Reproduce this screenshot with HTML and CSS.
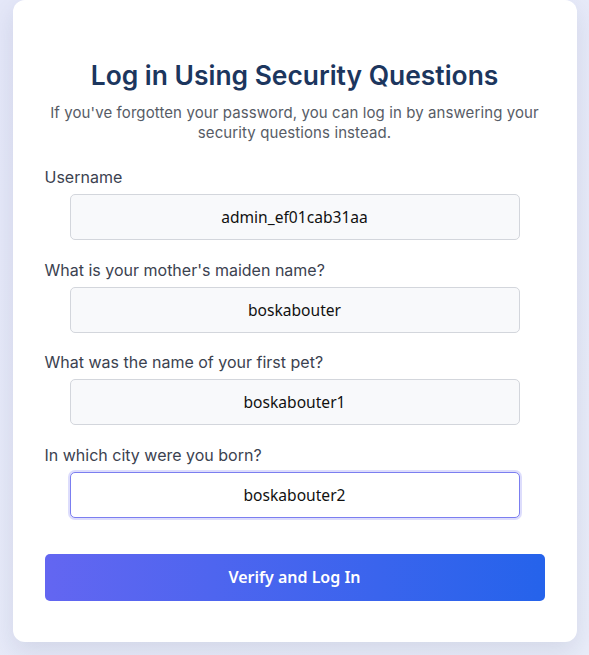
FILE: index.html
```html
<!DOCTYPE html>
<html lang="en">
<head>
<meta charset="utf-8">
<title>Log in Using Security Questions</title>
<link rel="stylesheet" href="styles.css">
</head>
<body>
<main class="card">
  <h1 class="title">Log in Using Security Questions</h1>
  <p class="subtitle">If you've forgotten your password, you can log in by answering your security questions instead.</p>
  <form class="form">
    <div class="field">
      <label class="label" for="username">Username</label>
      <input class="input" id="username" type="text" value="admin_ef01cab31aa">
    </div>
    <div class="field">
      <label class="label" for="q1">What is your mother's maiden name?</label>
      <input class="input" id="q1" type="text" value="boskabouter">
    </div>
    <div class="field">
      <label class="label" for="q2">What was the name of your first pet?</label>
      <input class="input" id="q2" type="text" value="boskabouter1">
    </div>
    <div class="field">
      <label class="label" for="q3">In which city were you born?</label>
      <input class="input input-focus" id="q3" type="text" value="boskabouter2">
    </div>
    <button class="button" type="button">Verify and Log In</button>
  </form>
</main>
</body>
</html>
```
FILE: styles.css
```css
* { box-sizing: border-box; }
html, body { margin: 0; padding: 0; }
body {
  min-height: 655px;
  background: linear-gradient(135deg, #e4e7f8 0%, #e9edf9 100%);
  font-family: Inter, "Noto Sans", sans-serif;
}
.card {
  width: 564px;
  margin: 0 auto;
  background: #ffffff;
  border-radius: 12px;
  padding: 59px 32px 41px;
  box-shadow: 0 10px 25px rgba(30, 40, 90, 0.10);
}
.title {
  margin: 0;
  text-align: center;
  font-size: 26.4px;
  line-height: 32px;
  font-weight: 600;
  color: #1c365e;
}
.subtitle {
  margin: 12px 0 0;
  text-align: center;
  font-size: 15px;
  line-height: 20px;
  letter-spacing: 0.1px;
  color: #575c66;
}
.form {
  margin-top: 24px;
  display: flex;
  flex-direction: column;
}
.field {
  display: flex;
  flex-direction: column;
  margin-bottom: 19.5px;
}
.label {
  font-size: 16px;
  line-height: 20px;
  color: #3b4250;
  margin-bottom: 7px;
}
.input {
  align-self: center;
  width: 450px;
  height: 46px;
  border: 1px solid #d3d6dc;
  border-radius: 5px;
  background: #f8f9fb;
  text-align: center;
  font-family: "Noto Sans", sans-serif;
  font-size: 15.6px;
  color: #111111;
  outline: none;
}
.input-focus {
  background: #ffffff;
  border-color: #7b7ef0;
  box-shadow: 0 0 0 2px rgba(99, 102, 241, 0.22);
}
.button {
  margin-top: 16.5px;
  height: 47px;
  border: none;
  border-radius: 5px;
  background: linear-gradient(90deg, #6366f1 0%, #2563eb 100%);
  color: #ffffff;
  font-family: "Noto Sans", sans-serif;
  font-size: 16px;
  font-weight: 600;
  cursor: pointer;
}
```
